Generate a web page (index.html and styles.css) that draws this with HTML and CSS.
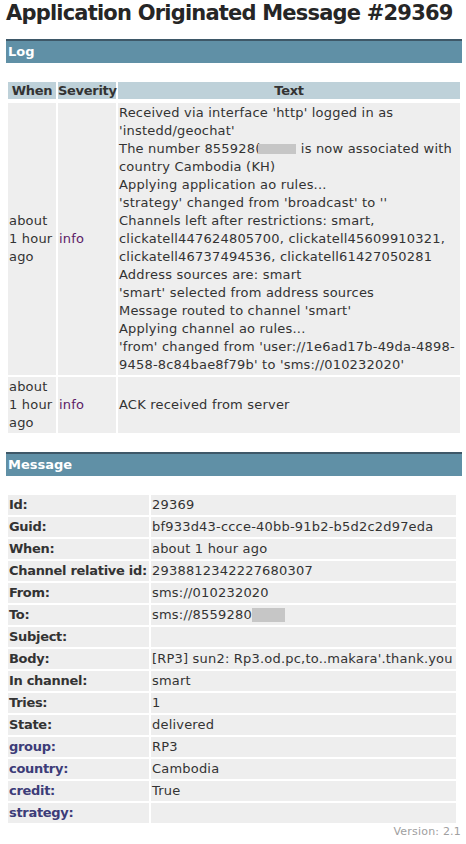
FILE: index.html
```html
<!DOCTYPE html>
<html>
<head>
<meta charset="utf-8">
<title>Application Originated Message #29369</title>
<link rel="stylesheet" href="styles.css">
</head>
<body>
<h1 class="title">Application Originated Message #29369</h1>

<h2 class="bar">Log</h2>
<table class="log">
  <thead>
    <tr>
      <th class="c-when">When</th>
      <th class="c-sev">Severity</th>
      <th class="c-text">Text</th>
    </tr>
  </thead>
  <tbody>
    <tr>
      <td>about<br>1 hour<br>ago</td>
      <td><span class="sev">info</span></td>
      <td class="msg">
        <div>Received via interface 'http' logged in as<br>'instedd/geochat'</div>
        <div>The number 855928(<span class="blur blur-a"></span> is now associated with<br>country Cambodia (KH)</div>
        <div>Applying application ao rules...</div>
        <div>'strategy' changed from 'broadcast' to ''</div>
        <div>Channels left after restrictions: smart,<br>clickatell447624805700, clickatell45609910321,<br>clickatell46737494536, clickatell61427050281</div>
        <div>Address sources are: smart</div>
        <div>'smart' selected from address sources</div>
        <div>Message routed to channel 'smart'</div>
        <div>Applying channel ao rules...</div>
        <div>'from' changed from 'user://1e6ad17b-49da-4898-<br>9458-8c84bae8f79b' to 'sms://010232020'</div>
      </td>
    </tr>
    <tr>
      <td>about<br>1 hour<br>ago</td>
      <td><span class="sev">info</span></td>
      <td class="msg"><div>ACK received from server</div></td>
    </tr>
  </tbody>
</table>

<h2 class="bar">Message</h2>
<table class="props">
  <tbody>
    <tr><th>Id:</th><td>29369</td></tr>
    <tr><th>Guid:</th><td>bf933d43-ccce-40bb-91b2-b5d2c2d97eda</td></tr>
    <tr><th>When:</th><td>about 1 hour ago</td></tr>
    <tr><th>Channel relative id:</th><td>2938812342227680307</td></tr>
    <tr><th>From:</th><td>sms://010232020</td></tr>
    <tr><th>To:</th><td>sms://8559280<span class="blur blur-b"></span></td></tr>
    <tr><th>Subject:</th><td></td></tr>
    <tr><th>Body:</th><td>[RP3] sun2: Rp3.od.pc,to..makara'.thank.you</td></tr>
    <tr><th>In channel:</th><td>smart</td></tr>
    <tr><th>Tries:</th><td>1</td></tr>
    <tr><th>State:</th><td>delivered</td></tr>
    <tr><th class="custom">group:</th><td>RP3</td></tr>
    <tr><th class="custom">country:</th><td>Cambodia</td></tr>
    <tr><th class="custom">credit:</th><td>True</td></tr>
    <tr><th class="custom">strategy:</th><td></td></tr>
  </tbody>
</table>

<div class="version">Version: 2.1</div>
</body>
</html>
```

FILE: styles.css
```css
html, body {
  margin: 0;
  background: #ffffff;
}
body {
  padding: 0 4px 0 6px;
  font-family: "DejaVu Sans", Verdana, sans-serif;
  font-size: 13px;
  letter-spacing: 0.2px;
  color: #333333;
}
.title {
  margin: 0 0 13px 0;
  font-size: 21px;
  letter-spacing: -0.8px;
  line-height: 26px;
  font-weight: bold;
  color: #262626;
  white-space: nowrap;
}
.bar {
  margin: 0 0 17px 0;
  border-top: 2px solid #3e5868;
  background: #6090a6;
  color: #ffffff;
  font-size: 13px;
  letter-spacing: 0;
  font-weight: bold;
  line-height: 22px;
  height: 22px;
  padding: 0 2px;
}
table {
  border-collapse: separate;
  border-spacing: 2px;
}
.log {
  width: 100%;
  table-layout: fixed;
  margin-bottom: 17px;
}
.log th {
  background: #bed1d9;
  font-weight: bold;
  letter-spacing: -0.3px;
  text-align: center;
  line-height: 15px;
  padding: 1px 0;
  border-bottom: 2px solid #ffffff;
  box-sizing: border-box;
  white-space: nowrap;
}
.log th.c-when { width: 48px; }
.log th.c-sev { width: 58px; }
.log td {
  background: #eeeeee;
  line-height: 18px;
  padding: 1px;
  vertical-align: middle;
  white-space: nowrap;
  overflow: hidden;
}
.sev {
  color: #5b1b66;
}
.blur {
  display: inline-block;
  background: #c6c6c6;
  vertical-align: middle;
}
.blur-a {
  width: 38px;
  height: 10px;
  margin-left: -2px;
  position: relative;
  top: -1px;
}
.blur-b {
  width: 33px;
  height: 14px;
  position: relative;
  top: -1px;
}
.props {
  width: 452px;
  table-layout: fixed;
}
.props th {
  width: 141px;
  box-sizing: border-box;
  text-align: left;
  font-weight: bold;
  letter-spacing: -0.3px;
  background: #eeeeee;
  line-height: 18px;
  padding: 1px;
  white-space: nowrap;
}
.props th.custom {
  color: #3c3c78;
}
.props td {
  background: #eeeeee;
  line-height: 18px;
  height: 18px;
  padding: 1px;
  white-space: nowrap;
}
.version {
  text-align: right;
  font-size: 11px;
  letter-spacing: 0.2px;
  line-height: 14px;
  color: #a0a0a0;
  padding-right: 1px;
}
```
